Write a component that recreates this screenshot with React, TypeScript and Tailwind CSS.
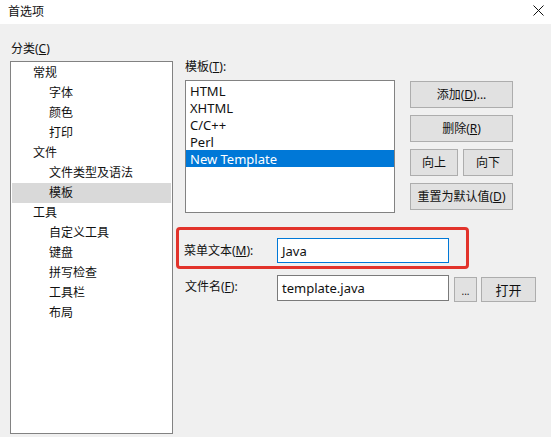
const tree: { label: string; depth: number; selected?: boolean }[] = [
	{ label: "常规", depth: 0 },
	{ label: "字体", depth: 1 },
	{ label: "颜色", depth: 1 },
	{ label: "打印", depth: 1 },
	{ label: "文件", depth: 0 },
	{ label: "文件类型及语法", depth: 1 },
	{ label: "模板", depth: 1, selected: true },
	{ label: "工具", depth: 0 },
	{ label: "自定义工具", depth: 1 },
	{ label: "键盘", depth: 1 },
	{ label: "拼写检查", depth: 1 },
	{ label: "工具栏", depth: 1 },
	{ label: "布局", depth: 1 },
];

const templates = ["HTML", "XHTML", "C/C++", "Perl", "New Template"];

function Btn({ children, className = "" }: { children: React.ReactNode; className?: string }) {
	return (
		<div
			className={`flex h-[27px] items-center justify-center border border-[#adadad] bg-[#e1e1e1] text-[12px] ${className}`}
		>
			{children}
		</div>
	);
}

export default function App() {
	return (
		<div className="flex h-[437px] w-[551px] flex-col overflow-hidden bg-[#f0f0f0] font-['Noto_Sans','Noto_Sans_CJK_SC',sans-serif] text-[12px] leading-[16px] text-[#111]">
			{/* title bar */}
			<div className="flex h-[24px] items-center justify-between bg-white pl-[8px] pr-[7px]">
				<span className="text-[12px]">首选项</span>
				<svg width="11" height="11" viewBox="0 0 11 11" className="mb-[3px]">
					<path d="M0.5 0.5 L10.5 10.5 M10.5 0.5 L0.5 10.5" stroke="#111" strokeWidth="1" />
				</svg>
			</div>

			<div className="flex flex-1">
				{/* category column */}
				<div className="ml-[10px] flex w-[163px] flex-col">
					<div className="mt-[17px] pl-[1px]">
						分类(<u>C</u>)
					</div>
					<div className="mt-[4px] h-[373px] border border-[#828282] bg-white px-[1px] pt-[1px]">
						{tree.map((t) => (
							<div
								key={t.label}
								className={`flex h-[20px] items-center ${t.depth ? "pl-[37px]" : "pl-[21px]"} ${t.selected ? "bg-[#d9d9d9]" : ""}`}
							>
								{t.label}
							</div>
						))}
					</div>
				</div>

				{/* right side */}
				<div className="ml-[12px] flex flex-col">
					<div className="mt-[35px]">
						模板(<u>T</u>):
					</div>
					<div className="mt-[5px] flex">
						<div className="h-[133px] w-[210px] border border-[#828282] bg-white pt-[1px]">
							{templates.map((t, i) => (
								<div
									key={t}
									className={`flex h-[17px] items-center pl-[4px] text-[13px] ${i === 4 ? "bg-[#0078d7] text-white" : ""}`}
								>
									{t}
								</div>
							))}
						</div>
						<div className="ml-[15px] mt-[1px] flex w-[103px] flex-col gap-[7px]">
							<Btn>
								添加(<u>D</u>)...
							</Btn>
							<Btn>
								删除(<u>R</u>)
							</Btn>
							<div className="flex justify-between">
								<Btn className="w-[48px]">向上</Btn>
								<Btn className="w-[50px]">向下</Btn>
							</div>
							<Btn>
								重置为默认值(<u>D</u>)
							</Btn>
						</div>
					</div>

					{/* highlighted menu text row */}
					<div className="-ml-[9px] mt-[14px] flex h-[42px] w-[293px] items-center rounded-[4px] border-[3px] border-[#e2332b] pl-[5px] pt-[5px]">
						<span className="w-[93px]">
							菜单文本(<u>M</u>):
						</span>
						<div className="flex h-[25px] w-[172px] items-center border border-[#0078d7] bg-white pl-[4px] text-[13px]">
							Java
						</div>
					</div>

					<div className="mt-[6px] flex items-start">
						<span className="mt-[4px] w-[92px]">
							文件名(<u>F</u>):
						</span>
						<div className="flex h-[26px] w-[172px] items-center border border-[#7a7a7a] bg-white pl-[4px] text-[13px]">
							template.java
						</div>
						<div className="ml-[5px] mt-[2px] flex h-[25px] w-[23px] items-end justify-center border border-[#adadad] bg-[#e1e1e1] pb-[5px] text-[10px] leading-[10px]">
							...
						</div>
						<div className="ml-[4px] mt-[2px] flex h-[25px] w-[55px] items-center justify-center border border-[#adadad] bg-[#e1e1e1] text-[13px]">
							打开
						</div>
					</div>
				</div>
			</div>
		</div>
	);
}
